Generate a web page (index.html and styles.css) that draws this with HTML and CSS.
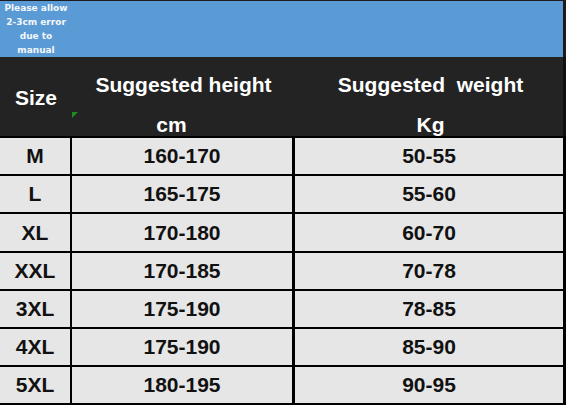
FILE: index.html
```html
<!DOCTYPE html>
<html>
<head>
<meta charset="utf-8">
<link rel="stylesheet" href="styles.css">
</head>
<body>
<div class="sheet">
  <div class="note">
    <div class="note-text">Please allow<br>2-3cm error<br>due to<br>manual</div>
  </div>
  <div class="head">
    <div class="hcell size">Size</div>
    <div class="hcell stack">
      <div class="l1">Suggested height</div>
      <div class="l2 cm">cm</div>
      <span class="flag"></span>
    </div>
    <div class="hcell stack">
      <div class="l1">Suggested&nbsp; weight</div>
      <div class="l2">Kg</div>
    </div>
  </div>
  <div class="row"><div class="c">M</div><div class="c">160-170</div><div class="c">50-55</div></div>
  <div class="row"><div class="c">L</div><div class="c">165-175</div><div class="c">55-60</div></div>
  <div class="row tall"><div class="c">XL</div><div class="c">170-180</div><div class="c">60-70</div></div>
  <div class="row"><div class="c">XXL</div><div class="c">170-185</div><div class="c">70-78</div></div>
  <div class="row"><div class="c">3XL</div><div class="c">175-190</div><div class="c">78-85</div></div>
  <div class="row"><div class="c">4XL</div><div class="c">175-190</div><div class="c">85-90</div></div>
  <div class="row last"><div class="c">5XL</div><div class="c">180-195</div><div class="c">90-95</div></div>
</div>
</body>
</html>
```
FILE: styles.css
```css
* { box-sizing: border-box; }
html, body { margin: 0; padding: 0; background: #ffffff; }
body { font-family: "Liberation Sans", Arial, sans-serif; }

.sheet { width: 566px; }

.note {
  height: 57px;
  border-top: 1px solid #1c1c1c;
  border-right: 3px solid #1c1c1c;
  background: #5b9bd5;
}
.note-text {
  width: 72px;
  text-align: center;
  font-family: "DejaVu Sans", Verdana, sans-serif;
  font-weight: bold;
  font-size: 9px;
  line-height: 14px;
  color: #f4f7fb;
}

.head {
  display: grid;
  grid-template-columns: 72px 223px 271px;
  height: 79px;
  background: #232323;
  border-right: 3px solid #111;
  color: #ffffff;
  font-weight: bold;
  font-size: 21px;
}
.hcell { display: flex; align-items: center; justify-content: center; }
.size { padding-top: 3px; }
.stack { flex-direction: column; position: relative; }
.stack .l1 { height: 56px; display: flex; align-items: center; justify-content: center; width: 100%; }
.stack .l2 { height: 23px; display: flex; align-items: center; justify-content: center; width: 100%; }
.cm { padding-right: 24px; }
.flag {
  position: absolute;
  left: 0;
  top: 55px;
  width: 0;
  height: 0;
  border-top: 6px solid #1f8a1f;
  border-right: 6px solid transparent;
}

.row {
  display: grid;
  grid-template-columns: 72px 223px 271px;
  height: 38px;
  border-top: 2px solid #000;
  font-weight: bold;
  font-size: 21px;
  color: #111111;
}
.row.tall { height: 39px; }
.row.last { height: 40px; border-bottom: 2px solid #000; }
.c {
  display: flex;
  align-items: center;
  justify-content: center;
  background: #e6e6e6;
  border-right: 2px solid #000;
}
.c:nth-child(2), .c:nth-child(3) { border-right-width: 3px; }
```
